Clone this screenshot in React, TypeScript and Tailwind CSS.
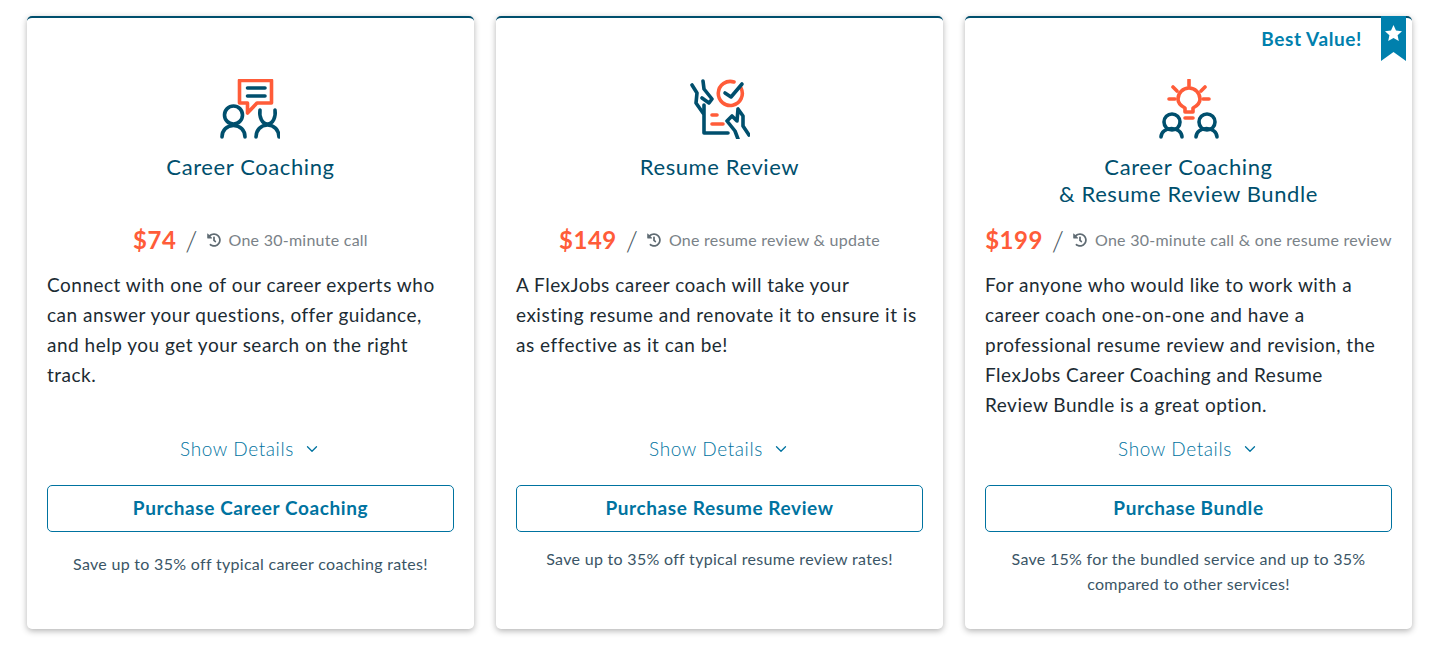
import { ChevronDown } from "lucide-react";
import { FaHistory } from "react-icons/fa";

const NAVY = "#004f6d";
const ORANGE = "#ff5c39";

function CoachingIcon() {
  return (
    <svg className="-ml-px" width="60" height="60" viewBox="0 0 60 60" fill="none" strokeWidth="3.6" strokeLinecap="round" strokeLinejoin="round">
      <path d="M19.5 1.5H51.5V24H37L27.5 34V24H19.5Z" stroke={ORANGE} />
      <path d="M27.5 9H45M27.5 17H45" stroke={NAVY} />
      <circle cx="13.5" cy="36" r="9" stroke={NAVY} />
      <path d="M2 58C2 51 7 46.5 13.5 46.5S25 51 25 58" stroke={NAVY} />
      <path d="M40 31C39 38 42 45 47.5 45S56 38 55 31" stroke={NAVY} />
      <path d="M36 58C36 51 41 46 47.5 46S59 51 59 58" stroke={NAVY} />
    </svg>
  );
}

function ResumeIcon() {
  return (
    <svg className="ml-px" width="60" height="60" viewBox="0 0 60 60" fill="none" strokeWidth="3.6" strokeLinecap="round" strokeLinejoin="round">
      <path d="M51 9A12 12 0 1 1 44 3" stroke={ORANGE} />
      <path d="M35 14L41 18L52 5" stroke={NAVY} />
      <path d="M22 36H27M22 45H33" stroke={ORANGE} />
      <path d="M2 6L7 14L6 24L13 34" stroke={NAVY} />
      <path d="M13 2L14 10L22 20L19 24L12 19" stroke={NAVY} />
      <path d="M14 26V54H38" stroke={NAVY} />
      <path d="M59 56L53 47V37L48 30L47 42L42 37L37 42L45 52L48 60" stroke={NAVY} />
    </svg>
  );
}

function BundleIcon() {
  return (
    <svg className="ml-px" width="60" height="60" viewBox="0 0 60 60" fill="none" strokeWidth="3.6" strokeLinecap="round" strokeLinejoin="round">
      <path d="M26 33V29C22 27 19 24 19 20A11 11 0 0 1 41 20C41 24 38 27 34 29V33Z" stroke={ORANGE} />
      <path d="M26 39H34M30 1V7M10 20H16M44 20H50M14 8L18 12M46 8L42 12" stroke={ORANGE} />
      <circle cx="13" cy="43" r="8" stroke={NAVY} />
      <circle cx="48" cy="43" r="8" stroke={NAVY} />
      <path d="M2 58C2 53 7 49.5 12.5 49.5S23 53 23 58" stroke={NAVY} />
      <path d="M37 58C37 53 42 49.5 47.5 49.5S58 53 58 58" stroke={NAVY} />
    </svg>
  );
}

function Ribbon() {
  return (
    <>
      <span className="absolute right-[50px] top-[7px] text-[19px] leading-[27px] font-bold tracking-[0.6px] text-[#0080ad]">Best Value!</span>
      <svg className="absolute right-[6px] top-[-2px]" width="25" height="45" viewBox="0 0 25 45">
        <path d="M0 0H25V45L12.5 36L0 45Z" fill="#0080ad" />
        <path d="M12.5 9L15 14.5L21 15.2L16.6 19.2L17.8 25L12.5 22L7.2 25L8.4 19.2L4 15.2L10 14.5Z" fill="#fff" />
      </svg>
    </>
  );
}

function Card({
  icon,
  title,
  price,
  term,
  body,
  cta,
  note,
  noteClass,
  best,
}: {
  icon: React.ReactNode;
  title: React.ReactNode;
  price: string;
  term: string;
  body: React.ReactNode;
  cta: string;
  note: React.ReactNode;
  noteClass: string;
  best?: boolean;
}) {
  return (
    <div className="relative h-[613px] w-[447px] rounded-[5px] border-t-2 border-[#004f6d] bg-white px-5 pt-[61px] shadow-[0_2px_6px_rgba(0,0,0,0.3)]">
      {best && <Ribbon />}
      <div className="flex justify-center">{icon}</div>
      <div className="mt-[14px] h-[71px] text-center text-[22px] leading-[27px] tracking-[0.6px] text-[#004f6d]">{title}</div>
      <div className="flex h-[32px] items-center justify-center whitespace-nowrap">
        <span className="text-[24px] font-bold tracking-[0.5px] text-[#ff5c39]">{price}</span>
        <span className="mx-[9px] text-[28px] font-light text-[#4c5a63]">/</span>
        <FaHistory className="mr-[8px] shrink-0 text-[14px] text-[#5f6b73]" />
        <span className="text-[16px] tracking-[0.25px] text-[#7a8288]">{term}</span>
      </div>
      <div className="mt-[14px] h-[150px] text-[19px] leading-[30px] tracking-[0.5px] text-[#1c2b33]">{body}</div>
      <div className="mt-[14px] flex h-[30px] items-center justify-center text-[19px] font-light tracking-[0.6px] text-[#0073a0]">
        Show Details
        <ChevronDown className="ml-[9px]" size={18} strokeWidth={1.75} />
      </div>
      <button className="mt-[21px] h-[47px] w-full rounded-[5px] border border-[#0073a0] text-[19px] font-bold tracking-[0.6px] text-[#0073a0]">
        {cta}
      </button>
      <div className={`text-center text-[16px] leading-[25px] tracking-[0.3px] text-[#3a5566] ${noteClass}`}>{note}</div>
    </div>
  );
}

export default function App() {
  return (
    <div className="flex h-[649px] gap-[22px] bg-white pl-[27px] pt-4 font-['Lato',sans-serif]">
      <Card
        icon={<CoachingIcon />}
        title="Career Coaching"
        price="$74"
        term="One 30-minute call"
        body={
          <>
            Connect with one of our career experts who
            <br />
            can answer your questions, offer guidance,
            <br />
            and help you get your search on the right
            <br />
            track.
          </>
        }
        cta="Purchase Career Coaching"
        note="Save up to 35% off typical career coaching rates!"
        noteClass="mt-[19px]"
      />
      <Card
        icon={<ResumeIcon />}
        title="Resume Review"
        price="$149"
        term="One resume review & update"
        body={
          <>
            A FlexJobs career coach will take your
            <br />
            existing resume and renovate it to ensure it is
            <br />
            as effective as it can be!
          </>
        }
        cta="Purchase Resume Review"
        note="Save up to 35% off typical resume review rates!"
        noteClass="mt-[14px]"
      />
      <Card
        best
        icon={<BundleIcon />}
        title={
          <>
            Career Coaching
            <br />& Resume Review Bundle
          </>
        }
        price="$199"
        term="One 30-minute call & one resume review"
        body={
          <>
            For anyone who would like to work with a
            <br />
            career coach one-on-one and have a
            <br />
            professional resume review and revision, the
            <br />
            FlexJobs Career Coaching and Resume
            <br />
            Review Bundle is a great option.
          </>
        }
        cta="Purchase Bundle"
        note={
          <>
            Save 15% for the bundled service and up to 35%
            <br />
            compared to other services!
          </>
        }
        noteClass="mt-[14px]"
      />
    </div>
  );
}
